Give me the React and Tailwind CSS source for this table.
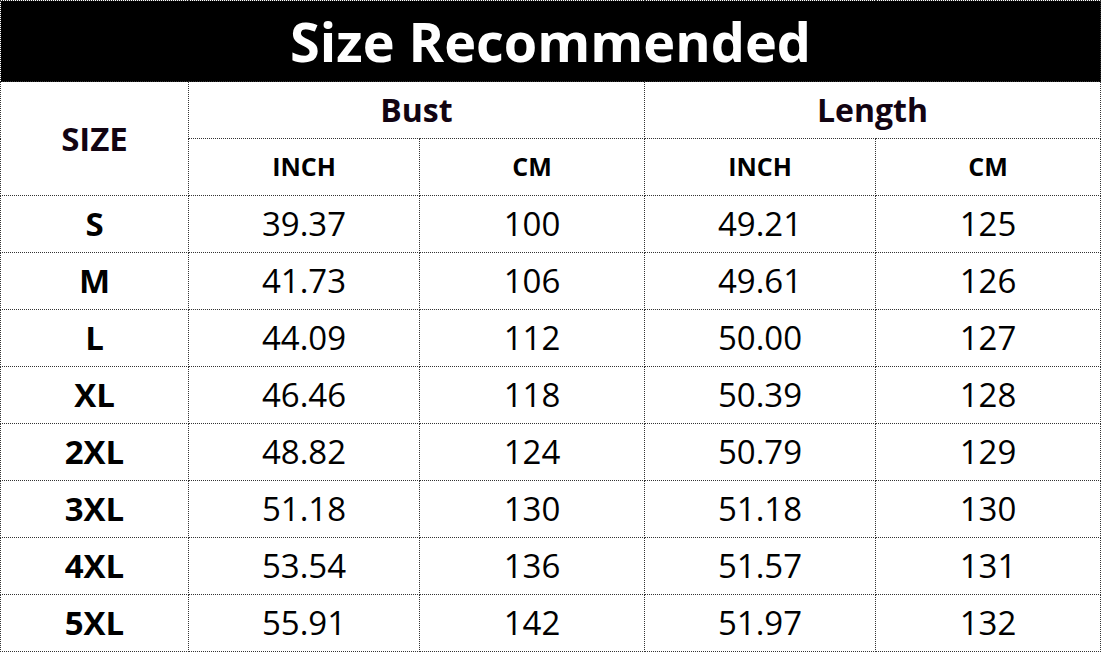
import React from "react";

const rows = [
  ["S", "39.37", "100", "49.21", "125"],
  ["M", "41.73", "106", "49.61", "126"],
  ["L", "44.09", "112", "50.00", "127"],
  ["XL", "46.46", "118", "50.39", "128"],
  ["2XL", "48.82", "124", "50.79", "129"],
  ["3XL", "51.18", "130", "51.18", "130"],
  ["4XL", "53.54", "136", "51.57", "131"],
  ["5XL", "55.91", "142", "51.97", "132"],
];

const cell = "border border-dotted border-[#333] p-0 text-center align-middle";

const App = () => {
  return (
    <div
      className="w-[1101px] h-[652px] bg-white text-black"
      style={{ fontFamily: '"Open Sans", "Noto Sans", sans-serif' }}
    >
      <table className="w-[1100px] border-collapse table-fixed">
        <colgroup>
          <col className="w-[188px]" />
          <col className="w-[231px]" />
          <col className="w-[225px]" />
          <col className="w-[231px]" />
          <col className="w-[225px]" />
        </colgroup>
        <thead>
          {/* Title */}
          <tr className="h-[81px]">
            <th
              colSpan={5}
              className={`${cell} bg-black text-white text-[54px] font-bold leading-none`}
            >
              Size Recommended
            </th>
          </tr>
          <tr className="h-[57px]">
            <th rowSpan={2} className={`${cell} text-[33px] font-bold text-[#120412]`}>
              SIZE
            </th>
            <th colSpan={2} className={`${cell} text-[32px] font-bold text-[#120412]`}>
              Bust
            </th>
            <th colSpan={2} className={`${cell} text-[32px] font-bold text-[#120412]`}>
              Length
            </th>
          </tr>
          <tr className="h-[57px]">
            {["INCH", "CM", "INCH", "CM"].map((t, i) => (
              <th key={i} className={`${cell} text-[25px] font-bold`}>
                {t}
              </th>
            ))}
          </tr>
        </thead>
        <tbody>
          {rows.map((r) => (
            <tr className="h-[57px]" key={r[0]}>
              <td className={`${cell} text-[33px] font-bold`}>{r[0]}</td>
              {r.slice(1).map((v, i) => (
                <td key={i} className={`${cell} text-[33px]`}>
                  {v}
                </td>
              ))}
            </tr>
          ))}
        </tbody>
      </table>
    </div>
  );
};

export default App;
